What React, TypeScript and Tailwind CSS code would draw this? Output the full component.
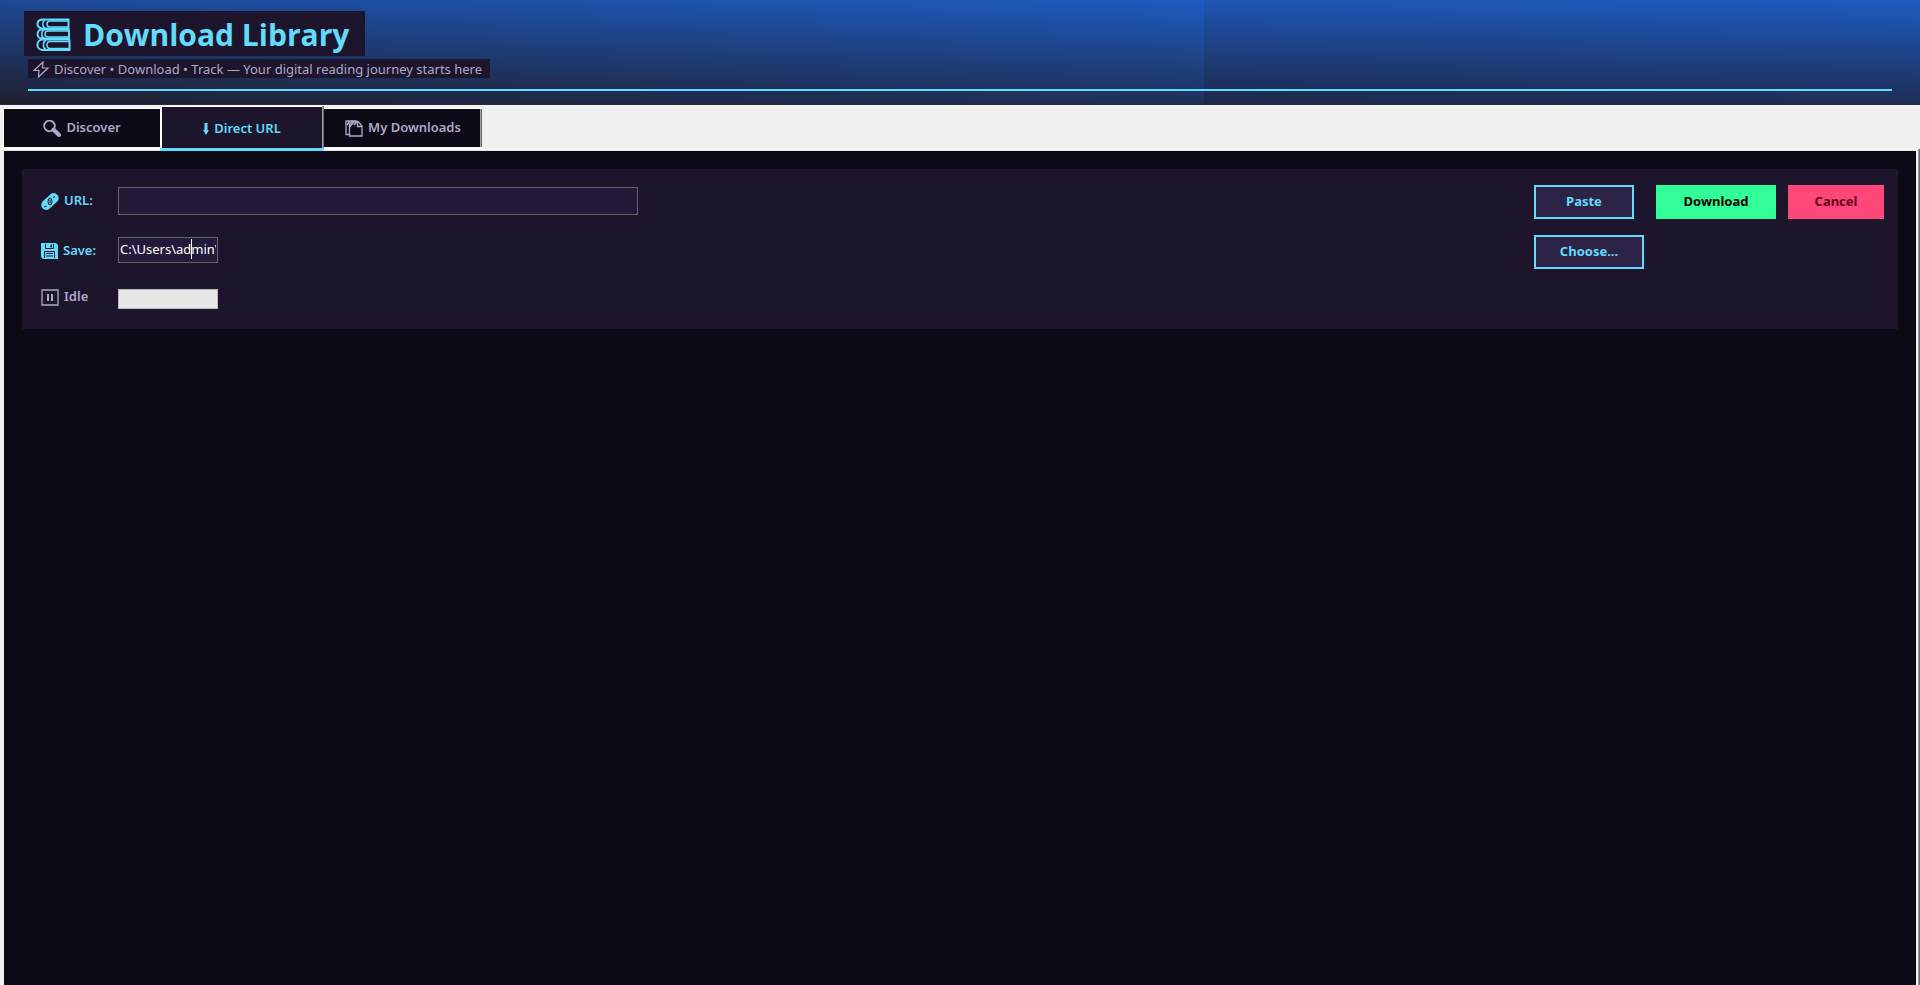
import type { ReactNode } from 'react';

const TABS = [
  { label: 'Discover', icon: <SearchIcon />, edge: 'w-[157px] border-l border-l-white' },
  { label: 'Direct URL', icon: <DownArrowIcon />, active: true },
  { label: 'My Downloads', icon: <FilesIcon />, edge: 'w-[158px] shadow-[inset_-1px_0_#696969,inset_-2px_0_#a0a0a0]' },
];

function BooksIcon() {
  return (
    <svg width="35" height="33" viewBox="0 0 35 33" fill="none" stroke="currentColor">
      <g strokeWidth="2">
        <path d="M33.500 1.500H7C3 1.500 1.500 3.500 1.500 6S3 10 6 10.500h26.500v-9" />
        <path d="M33 11.500H6C0 11.500 0 20.500 6 20.500h27v-9" />
        <path d="M34 21.500H7C-.5 21.500-.5 32 7 32h26.500V21.500" />
      </g>
      <g strokeWidth="1.500">
        <path d="M32 3H14c-4 0-4 6 0 6h18" />
        <path d="M33 13H12c-4 0-4 6 0 6h21" />
        <path d="M33 23.500H14c-4 0-4 7 0 7h19" />
        <path d="M9 2c-3 1.500-3 6.500 0 8M8 12c-3 1.500-3 7 0 8M10 22c-3.500 2-3.500 8 0 9.500" />
      </g>
    </svg>
  );
}

function BoltIcon() {
  return (
    <svg width="16" height="17" viewBox="0 0 16 17" fill="none" stroke="currentColor" strokeWidth="1.2">
      <path d="M10 1 1 9.500h5L5.500 16 15 7H9.500z" />
    </svg>
  );
}

function SearchIcon() {
  return (
    <svg width="18" height="17" viewBox="0 0 18 17" fill="none" stroke="currentColor">
      <circle cx="6.500" cy="6" r="5.300" strokeWidth="1.800" />
      <path d="m10.500 9.500 5.500 5.500" strokeWidth="4" strokeLinecap="round" />
    </svg>
  );
}

function DownArrowIcon() {
  return (
    <svg width="6" height="12" viewBox="0 0 6 12" fill="currentColor">
      <path d="M1.500 0h3v7H6l-3 5-3-5h1.500z" />
    </svg>
  );
}

function FilesIcon() {
  return (
    <svg width="18" height="17" viewBox="0 0 18 17" fill="none" stroke="currentColor" strokeWidth="1.300">
      <path d="M4.500 14.500H1V1h10l1.500 1.500" />
      <path d="M4.500 16V4L7 1.500h6L17 6v10z" />
      <path d="M12.500 2v4.500H17" />
      <path d="m2 5 2.500-3.500M4.500 7 9 1.500M9 5l2.500-3" strokeWidth="1.800" />
    </svg>
  );
}

function LinkIcon() {
  return (
    <svg width="18" height="17" viewBox="0 0 18 17">
      <rect x="-1" y="3.500" width="20" height="10" rx="5" transform="rotate(-43 9 8.500)" fill="currentColor" />
      <ellipse cx="9" cy="8.500" rx="2" ry="3.500" fill="none" stroke="#1d152b" />
      <path d="M9 6.500v4M3 14l2.500-1M12 4.500l2-1" stroke="#1d152b" />
    </svg>
  );
}

function SaveIcon() {
  return (
    <svg width="17" height="16" viewBox="0 0 17 16">
      <path d="M0 0h15l2 2v14H2l-2-2z" fill="currentColor" />
      <path d="M4.500 1v4.500h8V1M3.500 15V8.500h10V15M5 10.500h7M5 13h7" fill="none" stroke="#1d152b" />
      <path d="M9.500 1.500H11v3H9.500z" fill="#1d152b" />
    </svg>
  );
}

function PauseIcon() {
  return (
    <svg width="18" height="17" viewBox="0 0 18 17" fill="none" stroke="currentColor">
      <path d="M1 1h16v15H1z" strokeWidth="1.300" />
      <path d="M7 5v7M11 5v7" strokeWidth="2" />
    </svg>
  );
}

function FieldLabel({ icon, text, htmlFor }: { icon: ReactNode; text: string; htmlFor: string }) {
  return (
    <label htmlFor={htmlFor} className="flex h-8 items-center gap-[5px] font-semibold text-[#62dbfd]">
      {icon}
      {text}
    </label>
  );
}

function Header() {
  return (
    <header className="relative h-[105px] border-b border-[#2a2a3a] px-7 pt-[11px]">
      <div className="absolute inset-0 flex">
        <div className="w-[1204px] bg-[linear-gradient(182deg,#1d5bc0,#1f1f2f)]" />
        <div className="flex-1 bg-[linear-gradient(181deg,#1d5bc0,#1e284a)]" />
      </div>
      <div className="relative">
        <h1 className="-ml-1 flex h-[45px] w-fit items-center gap-3 bg-[#1d152b] pt-0.5 pr-4 pl-3 font-['Open_Sans',sans-serif] text-[30px] font-bold text-[#62dbfd]">
          <BooksIcon />
          Download Library
        </h1>
        <p className="mt-[3px] flex h-[19px] w-fit items-center gap-[5px] bg-[#1d152b] pt-0.5 pr-2 pl-[5px] text-[#b0a8c8]">
          <BoltIcon />
          Discover • Download • Track — Your digital reading journey starts here
        </p>
        <div className="mt-[11px] h-0.5 bg-[#62dbfd]" />
      </div>
    </header>
  );
}

function Tabs() {
  return (
    <nav role="tablist" className="flex h-11 items-end pl-[3px]">
      {TABS.map((tab) =>
        tab.active ? (
          <button
            key={tab.label}
            role="tab"
            aria-selected="true"
            className="relative -mb-0.5 flex h-[45px] w-[164px] items-center justify-center gap-[5px] border-b-3 border-[#62dbfd] bg-[#1d152b] pt-1 font-semibold text-[#62dbfd] shadow-[inset_-1px_0_#696969,inset_-2px_0_#a0a0a0,inset_2px_1px_#fff]"
          >
            {tab.icon}
            {tab.label}
          </button>
        ) : (
          <button
            key={tab.label}
            role="tab"
            aria-selected="false"
            className={`flex h-[41px] items-center justify-center gap-[5px] border-t border-b-2 border-t-white border-b-white bg-[#0d0a17] font-semibold text-[#b0a8c8] ${tab.edge}`}
          >
            {tab.icon}
            {tab.label}
          </button>
        )
      )}
    </nav>
  );
}

function DirectUrlPanel() {
  return (
    <section className="grid grid-cols-[77px_1fr_122px_228px] items-start gap-y-4 bg-[#1d152b] pt-4 pr-3.5 pb-5 pl-[19px]">
      <FieldLabel icon={<LinkIcon />} text="URL:" htmlFor="url" />
      <input
        id="url"
        type="text"
        className="mt-0.5 h-7 w-[520px] border border-[#646464] bg-[#241938] px-0.5 text-white outline-none"
      />
      <button className="h-[34px] w-[100px] border-2 border-[#62dbfd] bg-[#2d2346] font-bold text-[#62dbfd]">
        Paste
      </button>
      <div className="flex gap-3">
        <button className="h-[34px] w-[120px] bg-[#33ff99] font-bold text-black">Download</button>
        <button className="h-[34px] w-24 bg-[#ff4778] font-bold text-[#660022]">Cancel</button>
      </div>

      <FieldLabel icon={<SaveIcon />} text="Save:" htmlFor="save" />
      <div className="relative mt-0.5 w-[100px]">
        <input
          id="save"
          type="text"
          defaultValue="C:\Users\admin\Downloads"
          className="block h-[26px] w-full border border-[#646464] bg-[#241938] px-px pb-0.5 text-white outline-none"
        />
        {/* insertion cursor */}
        <span className="absolute top-0.5 left-[73px] h-5 w-px bg-white" />
      </div>
      <button className="col-span-2 h-[34px] w-[110px] border-2 border-[#62dbfd] bg-[#2d2346] font-bold text-[#62dbfd]">
        Choose...
      </button>

      <label htmlFor="progress" className="flex h-6 items-center gap-[5px] font-semibold text-[#b0a8c8]">
        <PauseIcon />
        Idle
      </label>
      <div
        id="progress"
        role="progressbar"
        aria-valuenow={0}
        className="mt-1 h-5 w-[100px] border border-[#bcbcbc] bg-[#e6e6e6]"
      />
    </section>
  );
}

export default function App() {
  return (
    <div className="flex min-h-screen flex-col bg-[#f0f0f0] font-['Noto_Sans','Open_Sans',sans-serif] text-[13px]">
      <Header />
      <Tabs />
      <main className="grow bg-[#0d0a17] px-[22px] pt-5 shadow-[inset_-1px_0_#696969,inset_-2px_0_#a0a0a0,inset_0_1px_#fff,inset_0_2px_#e3e3e3,inset_4px_0_#f0f0f0,inset_-4px_0_#f0f0f0]">
        <DirectUrlPanel />
      </main>
    </div>
  );
}
